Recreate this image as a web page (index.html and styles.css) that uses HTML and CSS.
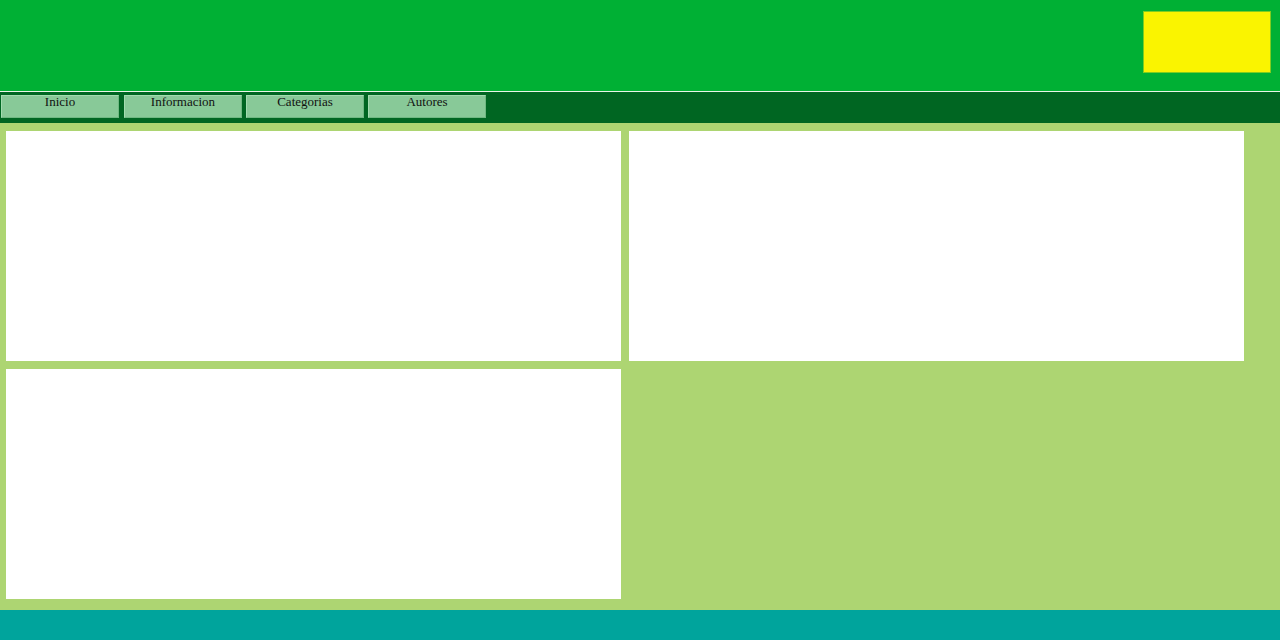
FILE: index.html
```html
<!DOCTYPE html>
<html lang="es">
<head>
<meta charset="utf-8">
<title>Pagina</title>
<link rel="stylesheet" href="styles.css">
</head>
<body>
<header class="header">
  <div class="logo"></div>
</header>
<nav class="nav">
  <a class="nav-item nav-item-first" href="#">Inicio</a>
  <a class="nav-item" href="#">Informacion</a>
  <a class="nav-item" href="#">Categorias</a>
  <a class="nav-item" href="#">Autores</a>
</nav>
<main class="content">
  <div class="card"></div>
  <div class="card"></div>
  <div class="card"></div>
</main>
<footer class="footer"></footer>
</body>
</html>
```

FILE: styles.css
```css
* { box-sizing: border-box; }
html, body { margin: 0; padding: 0; }
body {
  width: 1280px;
  height: 640px;
  overflow: hidden;
  font-family: "Liberation Serif", "Times New Roman", serif;
  background: #00a49c;
}
.header {
  height: 92px;
  background: #00b034;
  border-bottom: 1px solid #e8f5e8;
  display: flex;
  justify-content: flex-end;
  align-items: flex-start;
  padding: 11px 9px 0 0;
}
.logo {
  width: 128px;
  height: 62px;
  background: #faf400;
  border: 1px solid #7fcc20;
}
.nav {
  height: 31px;
  background: #006622;
  display: flex;
  gap: 4px;
  padding: 3px 0 0 1px;
}
.nav-item {
  width: 118px;
  height: 23px;
  background: #88c998;
  border: 1px solid #a3dcb0;
  border-right-color: #6fb882;
  border-bottom-color: #6fb882;
  color: #111;
  text-decoration: none;
  font-size: 13px;
  text-align: center;
  line-height: 12px;
}
.nav-item-first { margin-right: 1px; }
.content {
  height: 487px;
  background: #add572;
  display: flex;
  flex-wrap: wrap;
  align-content: flex-start;
  gap: 8px 8px;
  padding: 8px 0 0 6px;
}
.card {
  width: 615px;
  height: 230px;
  background: #ffffff;
}
.footer {
  height: 30px;
  background: #00a49c;
}
```
